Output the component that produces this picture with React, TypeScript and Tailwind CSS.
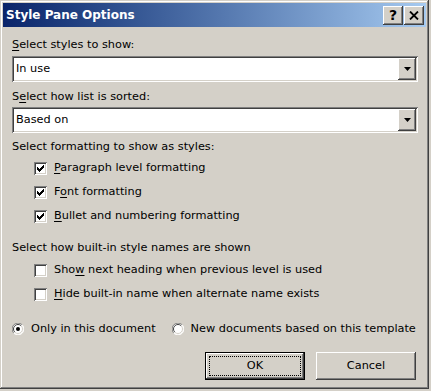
import type { ReactNode } from "react";

const raised =
  "shadow-[inset_-1px_-1px_#404040,inset_1px_1px_#ffffff,inset_-2px_-2px_#808080,inset_2px_2px_#d4d0c8]";
const sunken =
  "shadow-[inset_1px_1px_#808080,inset_-1px_-1px_#ffffff,inset_2px_2px_#404040,inset_-2px_-2px_#d4d0c8]";

function U({ children }: { children: ReactNode }) {
  return <span className="underline underline-offset-2">{children}</span>;
}

function Combo({ value }: { value: string }) {
  return (
    <div className={`flex h-[26px] w-[406px] items-stretch bg-white p-[2px] ${sunken}`}>
      <div className="flex flex-1 items-center pl-[2px]">{value}</div>
      <div className={`flex w-[18px] items-center justify-center bg-[#d4d0c8] ${raised}`}>
        <svg width="7" height="4" viewBox="0 0 7 4">
          <path d="M0 0h7L3.5 4z" fill="#000" />
        </svg>
      </div>
    </div>
  );
}

function Check({ checked, children }: { checked: boolean; children: ReactNode }) {
  return (
    <div className="flex h-[24px] items-center pl-[22px] whitespace-nowrap">
      <div className={`flex h-[13px] w-[13px] items-center justify-center bg-white ${sunken}`}>
        {checked && (
          <svg width="7" height="7" viewBox="0 0 7 7">
            <path d="M0 2h1v1h1v1h1V3h1V2h1V1h1V0h1v3h-1v1h-1v1h-1v1h-1v1H2V6H1V5H0z" fill="#000" />
          </svg>
        )}
      </div>
      <span className="ml-[7px]">{children}</span>
    </div>
  );
}

function Radio({ on, children }: { on: boolean; children: ReactNode }) {
  return (
    <div className="flex shrink-0 items-center whitespace-nowrap">
      <svg width="12" height="12" viewBox="0 0 12 12">
        <circle cx="6" cy="6" r="5.5" fill="#ffffff" />
        <path d="M10.2 1.8A5.5 5.5 0 0 0 1.8 10.2" stroke="#808080" fill="none" />
        <path d="M1.8 10.2A5.5 5.5 0 0 0 10.2 1.8" stroke="#ffffff" fill="none" />
        <path d="M9.2 2.8A4.5 4.5 0 0 0 2.8 9.2" stroke="#404040" fill="none" />
        <path d="M2.8 9.2A4.5 4.5 0 0 0 9.2 2.8" stroke="#d4d0c8" fill="none" />
        {on && <circle cx="6" cy="6" r="2" fill="#000" />}
      </svg>
      <span className="ml-[7px]">{children}</span>
    </div>
  );
}

function CaptionButton({ children }: { children: ReactNode }) {
  return (
    <div className={`flex h-[19px] w-[20px] items-center justify-center bg-[#d4d0c8] ${raised}`}>
      {children}
    </div>
  );
}

export default function App() {
  return (
    <div className="h-[391px] w-[431px] bg-[#d4d0c8]">
      <div
        className="flex h-[389px] w-[429px] flex-col bg-[#d4d0c8] p-[3px] text-[11.3px] leading-[16px] text-black shadow-[inset_-1px_-1px_#404040,inset_1px_1px_#d4d0c8,inset_-2px_-2px_#808080,inset_2px_2px_#ffffff]"
        style={{ fontFamily: '"DejaVu Sans", Tahoma, sans-serif' }}
      >
        {/* title bar */}
        <div className="flex h-[24px] items-center bg-gradient-to-r from-[#0a246a] to-[#a6caf0] pl-[3px] pr-[2px]">
          <span className="flex-1 text-[12px] font-bold text-white">Style Pane Options</span>
          <div className="flex gap-[1px]">
            <CaptionButton>
              <span className="text-[14px] font-bold leading-none">?</span>
            </CaptionButton>
            <CaptionButton>
              <svg width="10" height="9" viewBox="0 0 10 9">
                <path d="M1 0.5L9 8.5M9 0.5L1 8.5" stroke="#000" strokeWidth="1.8" />
              </svg>
            </CaptionButton>
          </div>
        </div>

        {/* body */}
        <div className="flex flex-col px-[9px]">
          <div className="mt-[10px]">
            <U>S</U>elect styles to show:
          </div>
          <div className="mt-[3px]">
            <Combo value="In use" />
          </div>
          <div className="mt-[7px]">
            S<U>e</U>lect how list is sorted:
          </div>
          <div className="mt-[2px]">
            <Combo value="Based on" />
          </div>
          <div className="mt-[6px]">Select formatting to show as styles:</div>
          <div className="mt-[1px]">
            <Check checked>
              <U>P</U>aragraph level formatting
            </Check>
            <Check checked>
              F<U>o</U>nt formatting
            </Check>
            <Check checked>
              <U>B</U>ullet and numbering formatting
            </Check>
          </div>
          <div className="mt-[12px]">Select how built-in style names are shown</div>
          <div className="mt-[2px]">
            <Check checked={false}>
              Sho<U>w</U> next heading when previous level is used
            </Check>
            <Check checked={false}>
              <U>H</U>ide built-in name when alternate name exists
            </Check>
          </div>
          <div className="mt-[15px] flex h-[16px] gap-[16px]">
            <Radio on>Only in this document</Radio>
            <Radio on={false}>New documents based on this template</Radio>
          </div>
          <div className="mt-[15px] flex justify-end gap-[11px] pr-[1px]">
            <div className="h-[28px] w-[100px] border border-black">
              <div className={`flex h-full w-full items-center justify-center bg-[#d4d0c8] p-[3px] ${raised}`}>
                <div className="flex h-full w-full items-center justify-center border border-dotted border-black">
                  OK
                </div>
              </div>
            </div>
            <div className={`flex h-[28px] w-[100px] items-center justify-center bg-[#d4d0c8] ${raised}`}>
              Cancel
            </div>
          </div>
        </div>
      </div>
    </div>
  );
}
